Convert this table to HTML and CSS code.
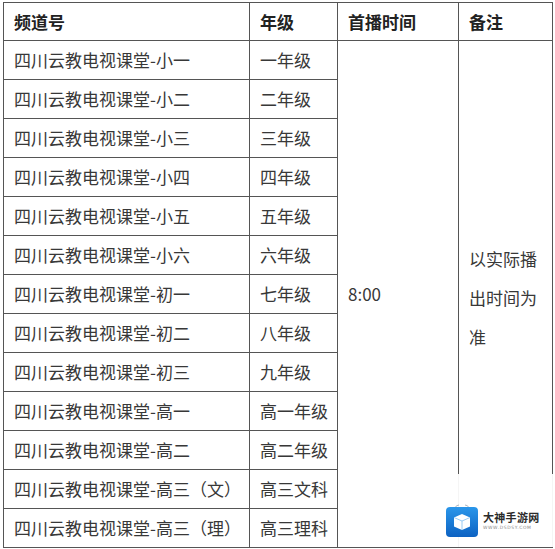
FILE: index.html
```html
<!DOCTYPE html>
<html lang="zh-CN">
<head>
<meta charset="utf-8">
<title>四川云教电视课堂</title>
<link rel="stylesheet" href="styles.css">
</head>
<body>
<div class="page">
<table class="schedule">
  <colgroup>
    <col class="c1"><col class="c2"><col class="c3"><col class="c4">
  </colgroup>
  <thead>
    <tr class="head"><th>频道号</th><th>年级</th><th>首播时间</th><th>备注</th></tr>
  </thead>
  <tbody>
    <tr><td>四川云教电视课堂-小一</td><td>一年级</td><td class="time" rowspan="13">8:00</td><td class="note" rowspan="13">以实际播出时间为准</td></tr>
    <tr><td>四川云教电视课堂-小二</td><td>二年级</td></tr>
    <tr><td>四川云教电视课堂-小三</td><td>三年级</td></tr>
    <tr><td>四川云教电视课堂-小四</td><td>四年级</td></tr>
    <tr><td>四川云教电视课堂-小五</td><td>五年级</td></tr>
    <tr><td>四川云教电视课堂-小六</td><td>六年级</td></tr>
    <tr><td>四川云教电视课堂-初一</td><td>七年级</td></tr>
    <tr><td>四川云教电视课堂-初二</td><td>八年级</td></tr>
    <tr><td>四川云教电视课堂-初三</td><td>九年级</td></tr>
    <tr><td>四川云教电视课堂-高一</td><td>高一年级</td></tr>
    <tr><td>四川云教电视课堂-高二</td><td>高二年级</td></tr>
    <tr><td>四川云教电视课堂-高三（文）</td><td>高三文科</td></tr>
    <tr><td>四川云教电视课堂-高三（理）</td><td>高三理科</td></tr>
  </tbody>
</table>
<div class="watermark">
  <svg class="logo" width="34" height="34" viewBox="0 0 34 34">
    <defs>
      <linearGradient id="g" x1="0" y1="0" x2="0" y2="1">
        <stop offset="0" stop-color="#2a96ea"/>
        <stop offset="1" stop-color="#0d62c2"/>
      </linearGradient>
    </defs>
    <path d="M10 4 Q11 1 14 1 M24 4 Q23 1 20 1" stroke="#9aa6b0" stroke-width="0.8" fill="none"/>
    <rect x="1" y="3" width="32" height="30" rx="4" fill="url(#g)"/>
    <path d="M17 10 L25 13.5 L25 22.5 L17 26 L9 22.5 L9 13.5 Z" fill="#ffffff"/>
    <path d="M9 13.5 L17 17 L25 13.5 M17 17 L17 26" stroke="#8ec6f4" stroke-width="0.9" fill="none"/>
  </svg>
  <div class="brand">
    <div class="brand-name">大神手游网</div>
    <div class="brand-url">WWW.DSDSY.COM</div>
  </div>
</div>
</div>
</body>
</html>
```

FILE: styles.css
```css
html, body {
  margin: 0;
  padding: 0;
  background: #ffffff;
}
.page {
  position: relative;
  width: 555px;
  height: 549px;
  padding: 2px 0 0 3px;
  box-sizing: border-box;
}
.schedule {
  border-collapse: collapse;
  table-layout: fixed;
  width: 549px;
  font-family: "Noto Sans CJK SC", "Noto Sans", sans-serif;
  font-size: 17px;
  color: #383838;
}
.c1 { width: 246px; }
.c2 { width: 88px; }
.c3 { width: 121px; }
.c4 { width: 94px; }
.schedule th,
.schedule td {
  border: 1px solid #555555;
  padding: 0 9px 0 10px;
  text-align: left;
  vertical-align: middle;
  white-space: nowrap;
  line-height: 20px;
}
.schedule th {
  font-weight: bold;
  color: #222222;
}
.schedule tr { height: 39px; }
.schedule tr.head { height: 38px; }
.schedule td.note {
  white-space: normal;
  line-height: 39px;
  padding-top: 6px;
}
.watermark {
  position: absolute;
  left: 440px;
  top: 474px;
  width: 115px;
  height: 73px;
  background: rgba(255, 255, 255, 0.94);
  display: flex;
  align-items: center;
  gap: 4px;
  padding: 20px 0 0 5px;
  box-sizing: border-box;
}
.logo { display: block; }
.brand {
  display: flex;
  flex-direction: column;
  gap: 1px;
}
.brand-name {
  font-family: "Noto Sans CJK SC", sans-serif;
  font-weight: bold;
  font-size: 11px;
  line-height: 13px;
  color: #2b2b2b;
  letter-spacing: 0.3px;
}
.brand-url {
  font-family: "DejaVu Sans", sans-serif;
  font-size: 4.5px;
  line-height: 6px;
  color: #8a8a8a;
  letter-spacing: 0.6px;
}
```
